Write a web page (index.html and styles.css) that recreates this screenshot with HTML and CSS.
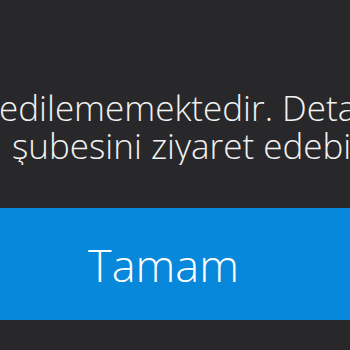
FILE: index.html
```html
<!DOCTYPE html>
<html lang="tr">
<head>
<meta charset="utf-8">
<link rel="stylesheet" href="styles.css">
</head>
<body>
<div class="screen">
  <div class="message">
    <p class="line line-1">edilememektedir. Detaylı</p>
    <p class="line line-2">şubesini ziyaret edebilirsiniz.</p>
  </div>
  <div class="button">Tamam</div>
</div>
</body>
</html>
```
FILE: styles.css
```css
html, body {
  margin: 0;
  padding: 0;
  background: #28282a;
  width: 350px;
  height: 350px;
  overflow: hidden;
}
.screen {
  display: flex;
  flex-direction: column;
  width: 350px;
  height: 350px;
  font-family: "Open Sans", "Noto Sans", sans-serif;
  color: #f2f2f2;
}
.message {
  padding-top: 89px;
  overflow: hidden;
}
.line {
  margin: 0;
  font-size: 35px;
  line-height: 38px;
  font-weight: 300;
  white-space: nowrap;
}
.line-1 {
  margin-left: -1px;
}
.line-2 {
  margin-left: 12px;
}
.button {
  margin-top: 43px;
  height: 112px;
  background: #0888da;
  display: flex;
  align-items: center;
  justify-content: center;
  font-size: 45px;
  font-weight: 300;
  color: #ffffff;
  padding-right: 23px;
}
```
